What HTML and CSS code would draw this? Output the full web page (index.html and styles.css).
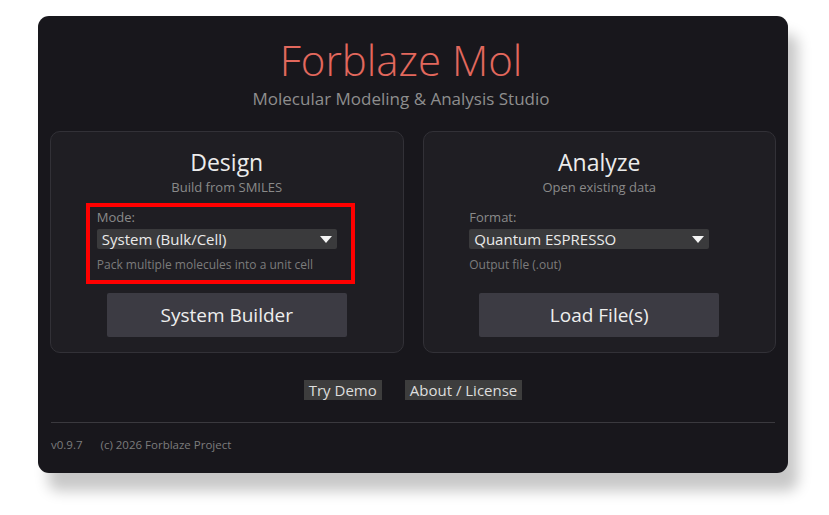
FILE: index.html
```html
<!DOCTYPE html>
<html lang="en">
<head>
<meta charset="utf-8">
<title>Forblaze Mol</title>
<link rel="stylesheet" href="styles.css">
</head>
<body>
<div class="app">
  <header class="header">
    <h1 class="title">Forblaze Mol</h1>
    <p class="subtitle">Molecular Modeling &amp; Analysis Studio</p>
  </header>
  <div class="cards">
    <section class="card">
      <h2 class="card-title">Design</h2>
      <p class="card-sub">Build from SMILES</p>
      <div class="field field-marked">
        <div class="field-label">Mode:</div>
        <div class="select">
          <span class="select-text">System (Bulk/Cell)</span>
          <svg class="caret" width="12" height="7" viewBox="0 0 12 7"><polygon points="0,0 12,0 6,7" fill="#f4f4f4"/></svg>
        </div>
        <div class="field-hint">Pack multiple molecules into a unit cell</div>
      </div>
      <button class="action">System Builder</button>
    </section>
    <section class="card">
      <h2 class="card-title">Analyze</h2>
      <p class="card-sub">Open existing data</p>
      <div class="field">
        <div class="field-label">Format:</div>
        <div class="select">
          <span class="select-text">Quantum ESPRESSO</span>
          <svg class="caret" width="12" height="7" viewBox="0 0 12 7"><polygon points="0,0 12,0 6,7" fill="#f4f4f4"/></svg>
        </div>
        <div class="field-hint">Output file (.out)</div>
      </div>
      <button class="action">Load File(s)</button>
    </section>
  </div>
  <nav class="links">
    <a class="link">Try Demo</a>
    <a class="link">About / License</a>
  </nav>
  <hr class="divider">
  <footer class="footer">
    <span class="version">v0.9.7</span>
    <span class="copy">(c) 2026 Forblaze Project</span>
  </footer>
</div>
</body>
</html>
```

FILE: styles.css
```css
*, *::before, *::after { box-sizing: border-box; }
html, body { margin: 0; background: #ffffff; }
html { height: 100%; }
body {
  min-height: 100%;
  padding: 16px 0 0 38px;
  font-family: "Open Sans", "Noto Sans", sans-serif;
}
.app {
  width: 750px;
  height: 457px;
  background: #18171c;
  border-radius: 11px;
  box-shadow: 10px 18px 14px rgba(0, 0, 0, 0.22);
  padding: 20px 12px 0;
  display: flex;
  flex-direction: column;
}
.header {
  text-align: center;
  padding-right: 24px;
}
.title {
  margin: 0;
  font-size: 42px;
  line-height: 48px;
  font-weight: 300;
  color: #e2685d;
}
.subtitle {
  margin: 4px 0 0;
  font-size: 17px;
  line-height: 22px;
  color: #8e8e8e;
}
.cards {
  margin-top: 21px;
  display: flex;
  gap: 19px;
}
.card {
  flex: 1;
  height: 222px;
  background: #1f1e23;
  border: 1px solid #323137;
  border-radius: 10px;
  padding: 14px 0 0;
  display: flex;
  flex-direction: column;
  align-items: center;
}
.card-title {
  margin: 0;
  font-size: 23px;
  line-height: 32px;
  font-weight: 400;
  color: #ececec;
}
.card-sub {
  margin: 0;
  font-size: 13px;
  line-height: 18px;
  color: #8a8a8a;
}
.field {
  position: relative;
  width: 260px;
  margin-top: 12px;
}
.field-marked::after {
  content: "";
  position: absolute;
  left: -11px;
  top: -5px;
  width: 269px;
  height: 81px;
  border: 4px solid #ff0000;
}
.field-label {
  font-size: 13px;
  line-height: 18px;
  color: #8a8a8a;
}
.select {
  margin-top: 3px;
  width: 240px;
  height: 20px;
  background: #3a3a3c;
  border-radius: 2px;
  display: flex;
  align-items: center;
  justify-content: space-between;
  padding: 0 5px 0 5px;
}
.select-text {
  font-size: 15px;
  line-height: 20px;
  color: #eaeaea;
}
.caret { display: block; }
.field-hint {
  margin-top: 7px;
  font-size: 12px;
  line-height: 18px;
  color: #7c7c7c;
}
.action {
  margin-top: 19px;
  width: 240px;
  height: 44px;
  border: none;
  border-radius: 2px;
  background: #3c3b43;
  color: #eeeeee;
  font-family: inherit;
  font-size: 19px;
  padding: 0;
}
.links {
  margin-top: 27px;
  display: flex;
  justify-content: center;
  gap: 23px;
}
.link {
  height: 20px;
  padding: 0 5px;
  background: #3d3d3d;
  color: #dedede;
  font-size: 15px;
  line-height: 20px;
}
.divider {
  margin: 22px 1px 0;
  border: none;
  height: 1px;
  background: #3a393e;
}
.footer {
  margin-top: 14px;
  padding-left: 1px;
  font-size: 11.5px;
  line-height: 16px;
  color: #7c7c7c;
  display: flex;
  gap: 18px;
}
```
